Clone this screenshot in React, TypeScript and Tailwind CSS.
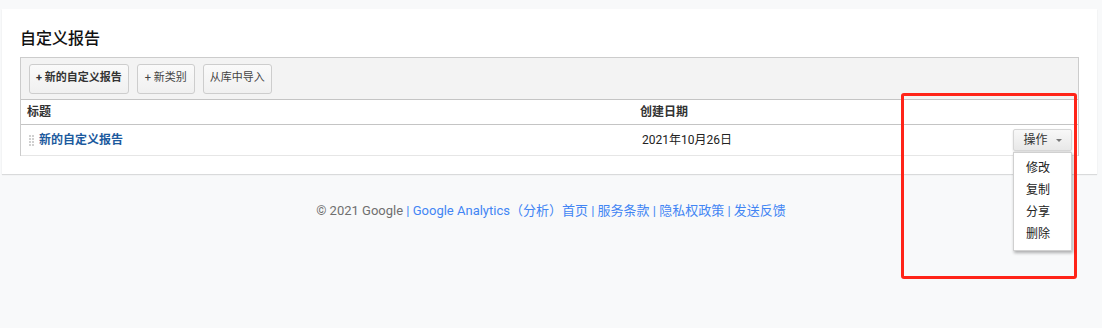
import { useState } from "react"

const font = { fontFamily: '"Roboto", "Noto Sans CJK SC", sans-serif' }

export default function App() {
  const [open] = useState(true)
  const menu = ["修改", "复制", "分享", "删除"]

  return (
    <div
      className="relative min-h-[328px] bg-[#f8f9fa] pt-[9px] text-[#222]"
      style={font}
    >
      <div className="ml-[2px] mr-[5px] bg-white px-[18px] pt-[18px] pb-[18px] shadow-[0_1px_1px_rgba(0,0,0,0.12)]">
        <h1 className="mb-[6px] text-[16px] leading-[24px] font-medium text-[#111]">自定义报告</h1>

        <div className="border border-[#cccccc] border-b-0">
          <div className="flex h-[42px] items-center gap-2 border-b border-[#c4c4c4] bg-[#f3f3f3] px-2">
            <button className="h-[30px] rounded-[3px] border border-[#cdcdcd] bg-gradient-to-b from-[#fafafa] to-[#f0f0f0] px-[6px] text-[11px] font-bold text-[#333]">
              + 新的自定义报告
            </button>
            <button className="h-[30px] rounded-[3px] border border-[#cdcdcd] bg-gradient-to-b from-[#fafafa] to-[#f0f0f0] px-[7px] text-[11px] text-[#444]">
              + 新类别
            </button>
            <button className="h-[30px] rounded-[3px] border border-[#cdcdcd] bg-gradient-to-b from-[#fafafa] to-[#f0f0f0] px-[6px] text-[11px] text-[#444]">
              从库中导入
            </button>
          </div>

          <div className="flex h-[25px] items-center border-b border-[#c4c4c4] text-[12px] font-semibold text-[#333]">
            <div className="w-[619px] pl-[6px]">标题</div>
            <div>创建日期</div>
          </div>

          <div className="flex h-[31px] items-center border-b border-[#e6e6e6] text-[12px]">
            <div className="flex w-[621px] items-center pl-[8px]">
              <span className="mr-[5px] grid grid-cols-2 gap-[1px]">
                {Array.from({ length: 8 }).map((_, i) => (
                  <span key={i} className="h-[2px] w-[2px] bg-[#d0d0d0]" />
                ))}
              </span>
              <a className="font-bold text-[#1c5a9e]">新的自定义报告</a>
            </div>
            <div className="flex-1 text-[#222]">2021年10月26日</div>
            <div className="relative mr-[6px]">
              <button className="flex h-[22px] w-[59px] items-center justify-center gap-[8px] rounded-[2px] border border-[#d6d6d6] bg-gradient-to-b from-[#f8f8f8] to-[#e8e8e8] text-[12px] text-[#333] shadow-[0_1px_2px_rgba(0,0,0,0.15)]">
                操作
                <span className="mt-[1px] h-0 w-0 border-x-[3px] border-t-[3px] border-x-transparent border-t-[#777]" />
              </button>
              {open && (
                <div className="absolute left-0 top-[23px] z-10 w-[59px] border border-[#d0d0d0] bg-white pt-[4px] pb-[5px] shadow-[1px_2px_3px_rgba(0,0,0,0.3)]">
                  {menu.map((m) => (
                    <div key={m} className="h-[22px] pl-[12px] text-[12px] leading-[22px] text-[#222]">
                      {m}
                    </div>
                  ))}
                </div>
              )}
            </div>
          </div>
        </div>
      </div>

      <div className="mt-[27px] text-center text-[13px] text-[#4285f4]">
        <span className="text-[#6f6f6f]">© 2021 Google</span> | Google Analytics（分析）首页 | 服务条款 | 隐私权政策 | 发送反馈
      </div>

      <div className="absolute left-[901px] top-[93px] h-[186px] w-[176px] rounded-[3px] border-[3px] border-[#ff2418]" />
    </div>
  )
}
